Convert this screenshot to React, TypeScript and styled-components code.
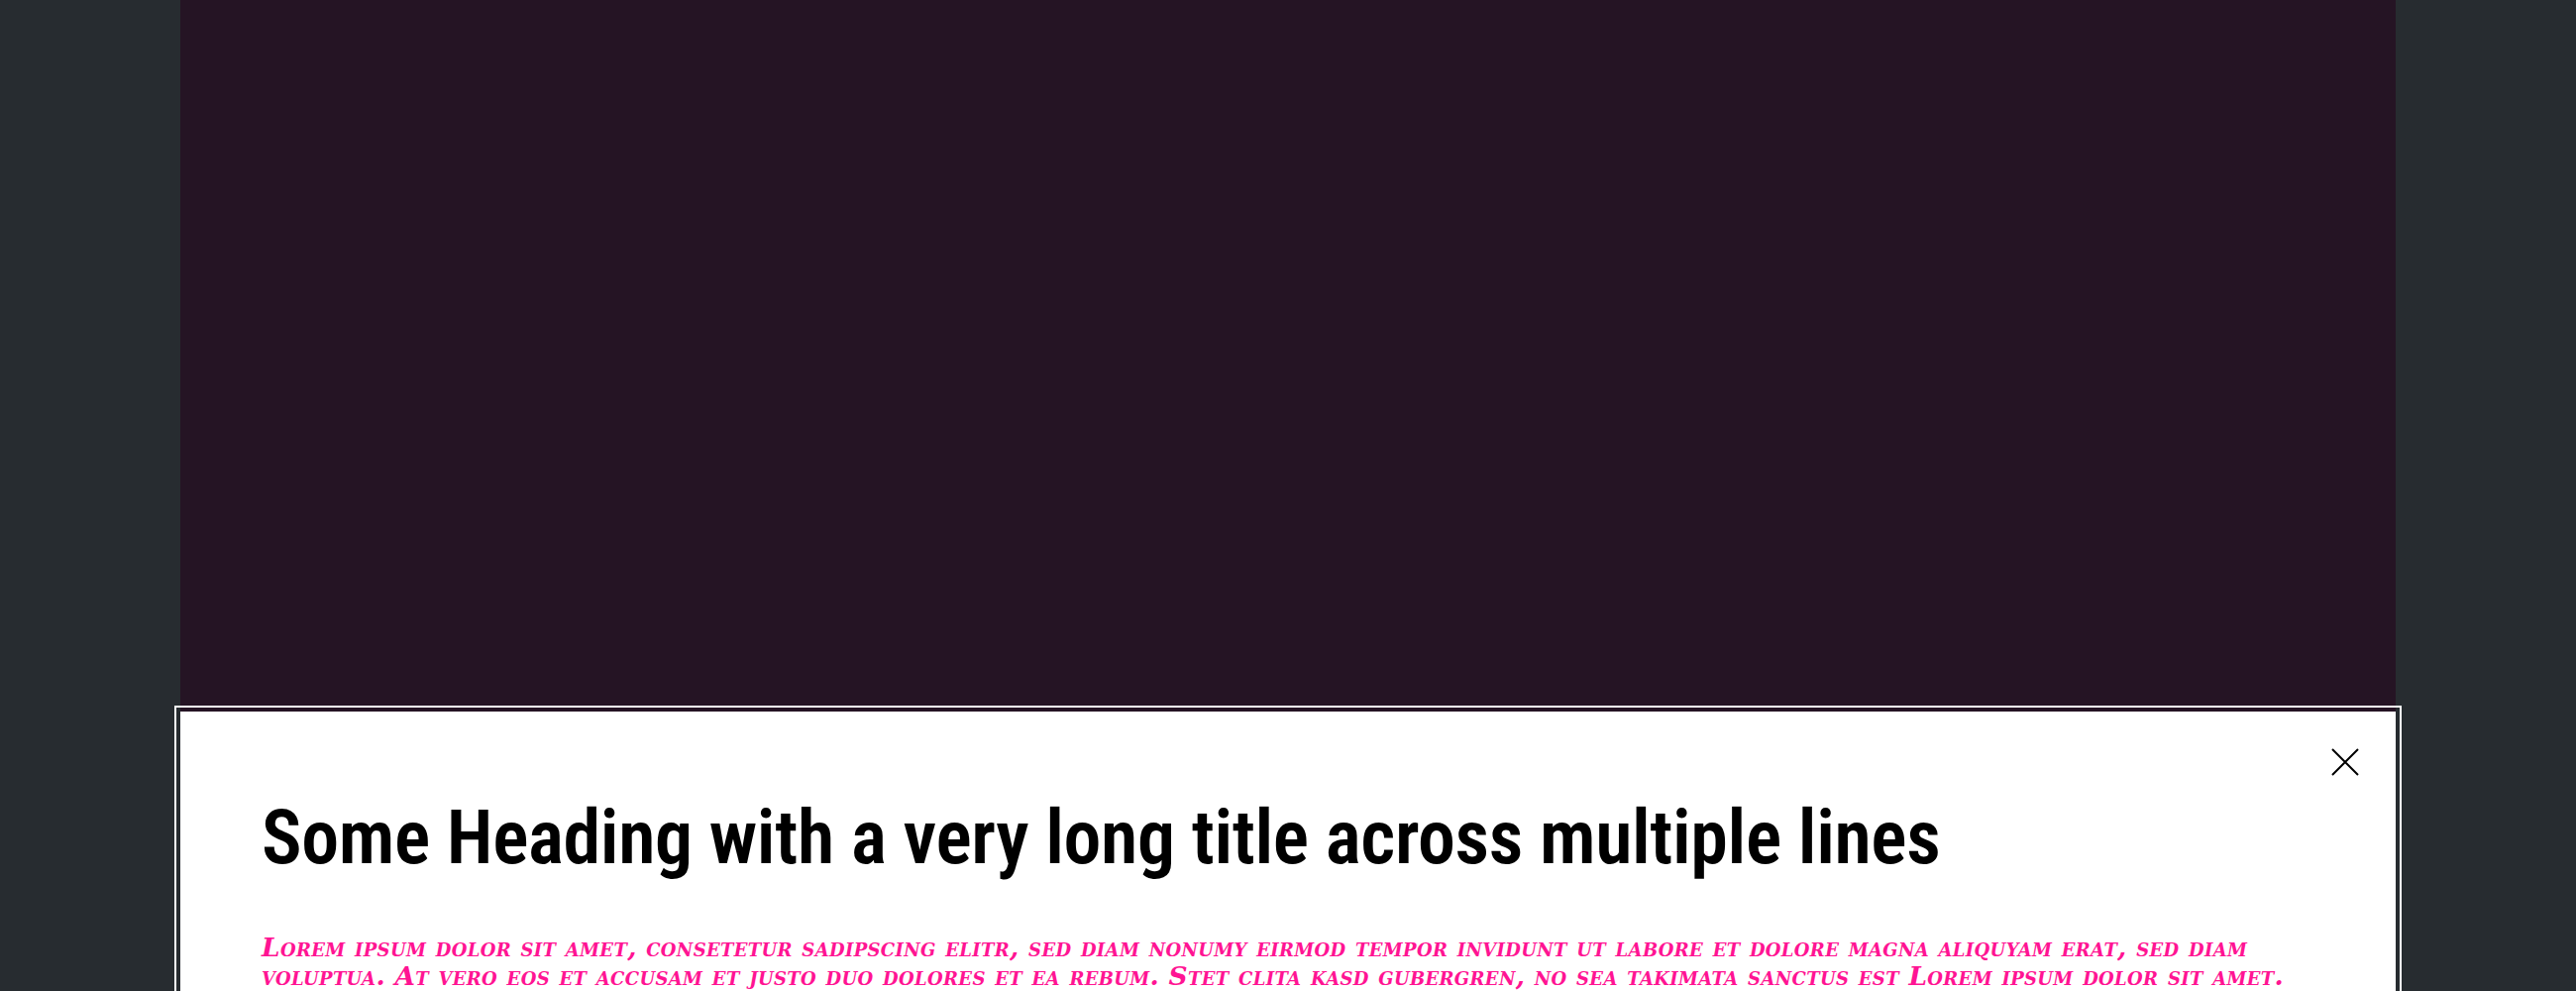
import React from 'react'
import styled, { createGlobalStyle } from 'styled-components'

const GlobalStyle = createGlobalStyle`
  html, body {
    margin: 0;
    padding: 0;
    background: #272c30;
  }
`

const App = () => {
  return (
    <>
      <GlobalStyle />
      <Page>
        <Panel />
      </Page>
      <Dialog role="dialog" aria-modal="true">
        <Close aria-label="Close">
          <svg width="28" height="28" viewBox="0 0 28 28">
            <path d="M1 1 L27 27 M27 1 L1 27" stroke="#000" strokeWidth="2" fill="none" />
          </svg>
        </Close>
        <Heading>Some Heading with a very long title across multiple lines</Heading>
        <Body>
          Lorem ipsum dolor sit amet, consetetur sadipscing elitr, sed diam nonumy eirmod tempor
          invidunt ut labore et dolore magna aliquyam erat, sed diam voluptua. At vero eos et
          accusam et justo duo dolores et ea rebum. Stet clita kasd gubergren, no sea takimata
          sanctus est Lorem ipsum dolor sit amet.
        </Body>
      </Dialog>
    </>
  )
}

export default App

const Page = styled.div`
  display: flex;
  justify-content: center;
  min-height: 100vh;
`

const Panel = styled.main`
  width: 2236px;
  min-height: 100vh;
  background: #251424;
`

const Dialog = styled.section`
  position: fixed;
  top: 718px;
  left: 50%;
  transform: translateX(-50%);
  width: 2236px;
  box-sizing: border-box;
  padding: 82px 82px 80px;
  background: #fff;
  outline: 2px solid #fff;
  outline-offset: 4px;
`

const Close = styled.button`
  position: absolute;
  top: 37px;
  right: 37px;
  width: 28px;
  height: 28px;
  padding: 0;
  border: 0;
  background: none;
  cursor: pointer;
  svg {
    display: block;
  }
`

const Heading = styled.h2`
  margin: 0 0 50px;
  font-family: Roboto, "Liberation Sans", sans-serif;
  font-stretch: condensed;
  font-weight: 600;
  font-size: 76px;
  line-height: 1.2;
  letter-spacing: -0.4px;
  color: #000;
`

const Body = styled.p`
  margin: 0;
  font-family: "DejaVu Serif", serif;
  font-weight: 700;
  font-style: italic;
  font-variant: small-caps;
  font-size: 26.4px;
  line-height: 29px;
  letter-spacing: 0.33px;
  color: #ff1493;
`
